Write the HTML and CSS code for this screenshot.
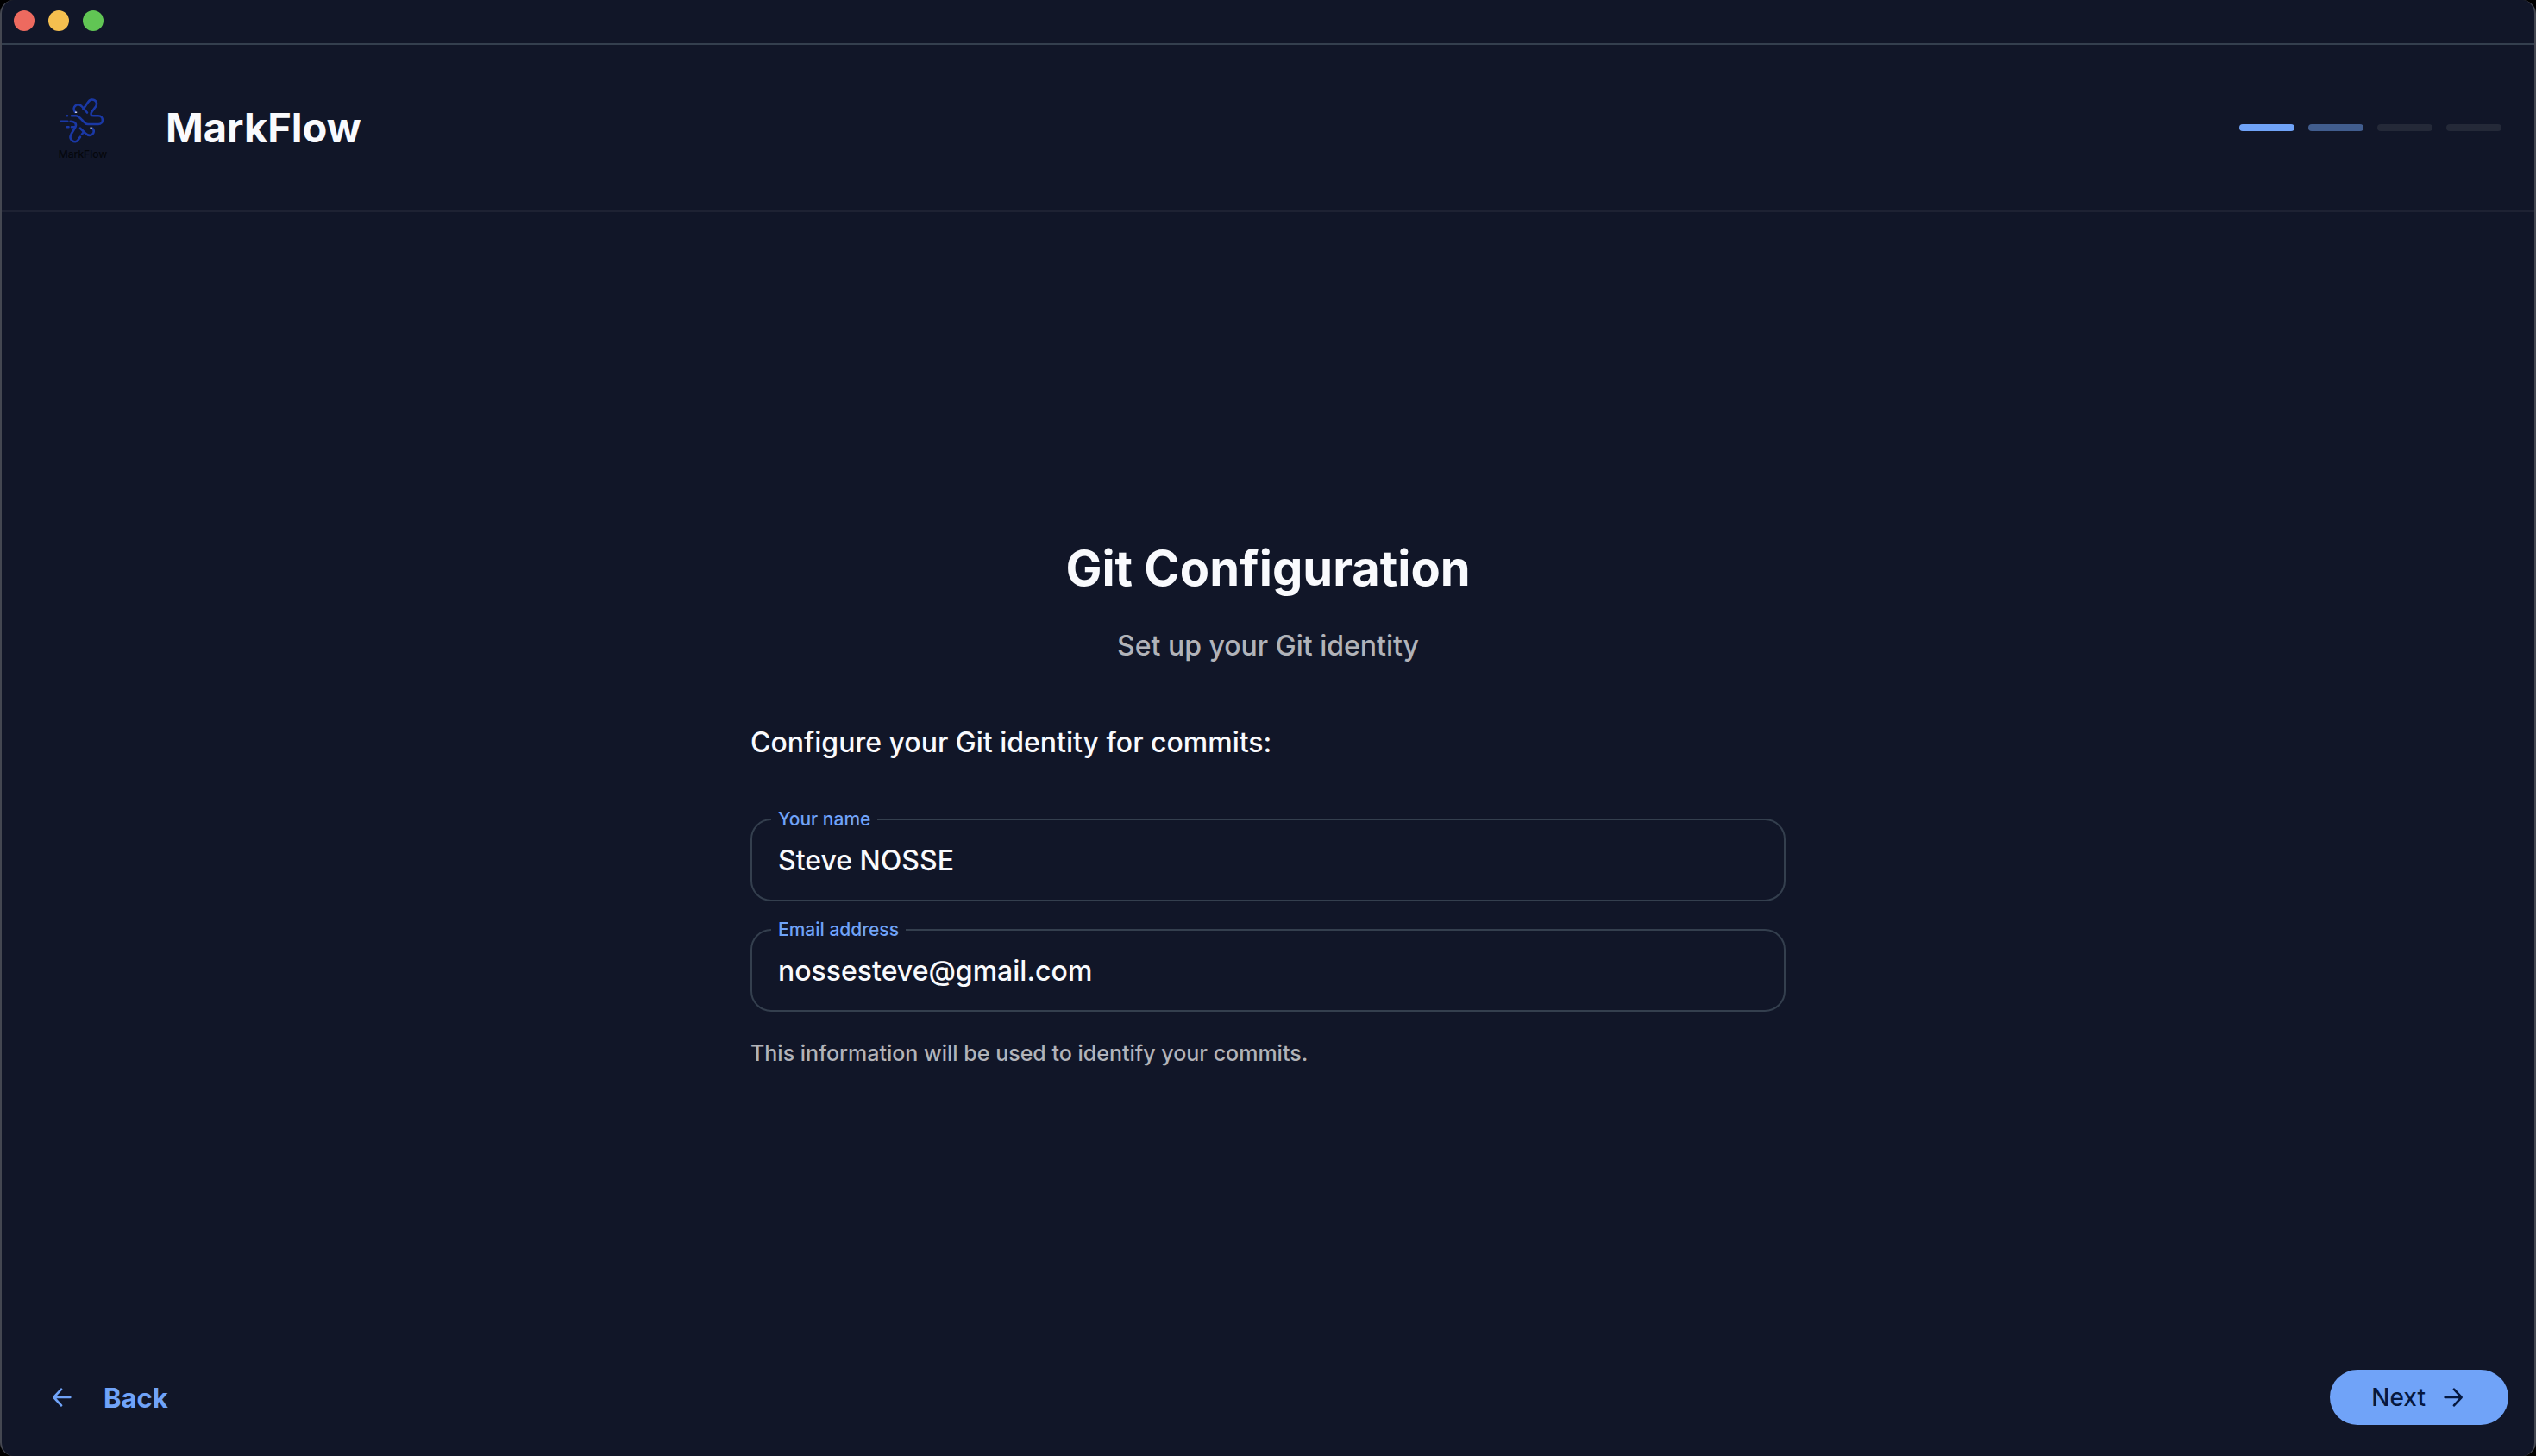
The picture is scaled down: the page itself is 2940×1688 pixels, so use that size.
FILE: index.html
```html
<!DOCTYPE html>
<html lang="en">
<head>
  <meta charset="utf-8">
  <meta name="viewport" content="width=device-width, initial-scale=1">
  <title>MarkFlow</title>
  <link rel="stylesheet" href="styles.css">
</head>
<body>
  <div class="window">
    <div class="titlebar">
      <button class="light light-close" type="button" aria-label="Close"></button>
      <button class="light light-minimize" type="button" aria-label="Minimize"></button>
      <button class="light light-zoom" type="button" aria-label="Zoom"></button>
    </div>

    <header class="header">
      <div class="brand">
        <div class="logo">
          <svg class="logo-mark" viewBox="-1 0 54 54" aria-hidden="true">
            <g fill="none" stroke="#1a38a5" stroke-width="2.6" stroke-linecap="round" stroke-linejoin="round">
              <path d="M17 16C12.500 10 20 4 25 9.500L31 16.500"/>
              <path d="M26.500 12.500L32 4.500C36 -2 45 3 41 9.500L36.500 15.500C34.500 18.500 36 20.300 38.500 20.300H44C50.500 20.300 50.500 30 44 30H32C29 30 28 28 25.500 25.500C22 22 21 20.300 18 20.300H13"/>
              <path d="M0.700 26.700H8.300M11.700 26.700C17 26.700 19.500 30 17 34L12.500 41.500C9 48 17 53.500 20.700 48L23 44.700M25 41.500L27 39"/>
              <path d="M23 34.700L29 40.500C35 46 41.500 40 37.500 35"/>
              <path d="M7.700 20.300H8M7.700 33.300H9.500M13 33.300H17"/>
            </g>
            <path d="M17 16.300H19.200M34.500 34.300H36.700" stroke="#c3cbe8" stroke-width="1.500"/>
          </svg>
          <span class="logo-name">MarkFlow</span>
        </div>
        <h1 class="brand-name">MarkFlow</h1>
      </div>
      <div class="steps" role="img" aria-label="Step 2 of 4">
        <span class="step step-done"></span>
        <span class="step step-current"></span>
        <span class="step"></span>
        <span class="step"></span>
      </div>
    </header>

    <main class="main">
      <form class="form" id="identity">
        <h2 class="title">Git Configuration</h2>
        <p class="subtitle">Set up your Git identity</p>
        <p class="lead">Configure your Git identity for commits:</p>
        <div class="fields">
          <div class="field">
            <label class="field-label" for="name">Your name</label>
            <input class="field-input" id="name" type="text" value="Steve NOSSE">
          </div>
          <div class="field">
            <label class="field-label" for="email">Email address</label>
            <input class="field-input" id="email" type="email" value="nossesteve@gmail.com">
          </div>
        </div>
        <p class="hint">This information will be used to identify your commits.</p>
      </form>
    </main>

    <footer class="footer">
      <button class="button button-back" type="button">
        <svg class="arrow" viewBox="0 0 24 24" aria-hidden="true"><path d="M19 12H5M11.300 5L4.800 12L11.300 19"/></svg>
        Back
      </button>
      <button class="button button-next" type="submit" form="identity">
        Next
        <svg class="arrow" viewBox="0 0 24 24" aria-hidden="true"><path d="M5 12H19M12.700 5L19.200 12L12.700 19"/></svg>
      </button>
    </footer>
  </div>
</body>
</html>
```

FILE: styles.css
```css
* {
  box-sizing: border-box;
}

body {
  margin: 0;
  background: #000;
  color: #f9fafd;
  font-family: Inter, "Liberation Sans", sans-serif;
}

h1,
h2,
p {
  margin: 0;
}

button,
input {
  font: inherit;
}

.window {
  display: flex;
  flex-direction: column;
  min-height: 100vh;
  border: solid #444751;
  border-width: 0 2px;
  border-radius: 16px;
  background: #111628;
  overflow: hidden;
}

.titlebar {
  display: flex;
  align-items: center;
  gap: 16px;
  height: 52px;
  padding: 0 14px 2px;
  border-bottom: 2px solid #343f4e;
}

.light {
  width: 24px;
  height: 24px;
  padding: 0;
  border: 0;
  border-radius: 50%;
}

.light-close {
  background: #ed6a5f;
}

.light-minimize {
  background: #f5bf4f;
}

.light-zoom {
  background: #61c554;
}

.header {
  display: flex;
  align-items: center;
  justify-content: space-between;
  height: 194px;
  padding: 0 38px 0 64px;
  border-bottom: 2px solid #1e2233;
}

.brand {
  display: flex;
  align-items: center;
  gap: 66px;
}

.logo {
  display: flex;
  flex-direction: column;
  align-items: center;
  gap: 4px;
  width: 60px;
  padding-top: 4px;
}

.logo-mark {
  width: 54px;
  height: 54px;
}

.logo-name {
  color: #05070c;
  font-size: 12px;
  font-weight: 500;
  line-height: 14px;
}

.brand-name {
  font-size: 47px;
  font-weight: 700;
  line-height: 64px;
}

.steps {
  display: flex;
  gap: 16px;
}

.step {
  width: 64px;
  height: 8px;
  border-radius: 4px;
  background: #242938;
}

.step-done {
  background: #70a3f8;
}

.step-current {
  background: #415d8e;
}

.main {
  display: flex;
  flex: 1;
  align-items: center;
  justify-content: center;
  padding: 54px 32px 0;
}

.form {
  width: 100%;
  max-width: 1200px;
}

.title {
  font-size: 56px;
  font-weight: 700;
  line-height: 80px;
  text-align: center;
}

.subtitle {
  margin-top: 26px;
  color: #b1b3b9;
  font-size: 32px;
  font-weight: 500;
  line-height: 48px;
  text-align: center;
}

.lead {
  margin-top: 64px;
  font-size: 32px;
  font-weight: 500;
  line-height: 48px;
}

.fields {
  display: grid;
  gap: 32px;
  margin-top: 64px;
}

.field {
  position: relative;
}

.field-label {
  position: absolute;
  top: -11px;
  left: 24px;
  padding: 0 8px;
  background: #111628;
  color: #70a3f8;
  font-size: 21px;
  font-weight: 500;
  line-height: 24px;
}

.field-input {
  display: block;
  width: 100%;
  height: 96px;
  padding: 0 30px;
  border: 2px solid #343f4e;
  border-radius: 24px;
  background: transparent;
  color: #f9fafd;
  font-size: 32px;
  font-weight: 500;
}

.hint {
  margin-top: 32px;
  color: #b1b3b9;
  font-size: 25px;
  font-weight: 500;
  line-height: 32px;
}

.footer {
  display: flex;
  align-items: center;
  justify-content: space-between;
  padding: 32px 30px 36px 54px;
}

.button {
  display: flex;
  align-items: center;
  height: 64px;
  border: 0;
  border-radius: 32px;
}

.button-back {
  gap: 32px;
  padding: 0;
  background: transparent;
  color: #70a3f8;
  font-size: 31px;
  font-weight: 700;
}

.button-next {
  gap: 16px;
  padding: 0 48px;
  background: #70a3f8;
  color: #06183f;
  font-size: 28px;
  font-weight: 500;
}

.arrow {
  width: 32px;
  height: 32px;
  fill: none;
  stroke: currentColor;
  stroke-width: 2;
  stroke-linecap: round;
  stroke-linejoin: round;
}
```
